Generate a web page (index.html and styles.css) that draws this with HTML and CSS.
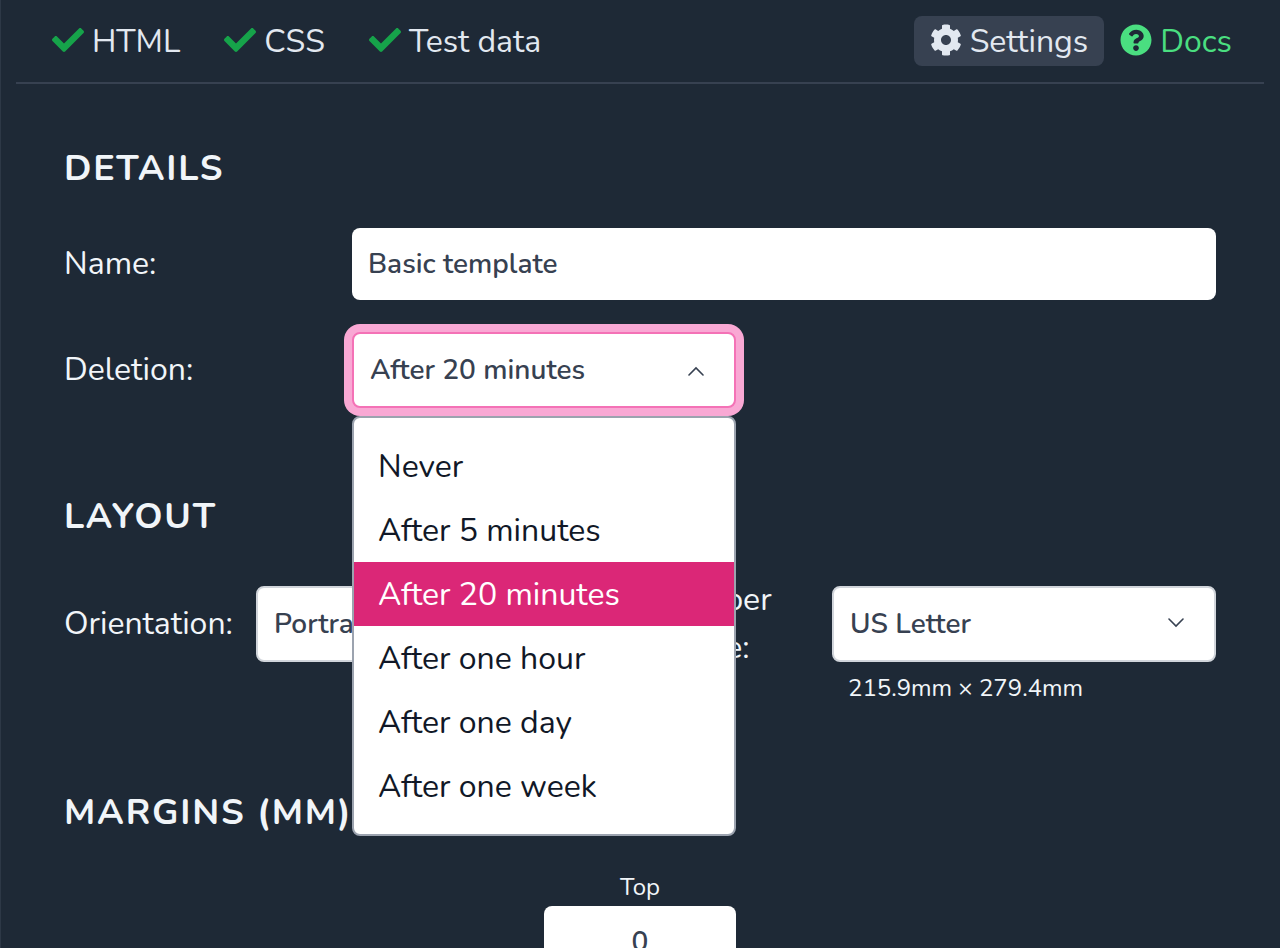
FILE: index.html
```html
<!DOCTYPE html>
<html lang="en">
<head>
<meta charset="utf-8">
<meta name="viewport" content="width=device-width, initial-scale=1">
<title>Template settings</title>
<link rel="stylesheet" href="styles.css">
</head>
<body>
<svg class="sprite" aria-hidden="true">
  <symbol id="check" viewBox="0 0 512 512"><path d="M173.898 439.404l-166.4-166.4c-9.997-9.997-9.997-26.206 0-36.204l36.203-36.204c9.997-9.998 26.207-9.998 36.204 0L192 312.69 432.095 72.596c9.997-9.997 26.207-9.997 36.204 0l36.203 36.204c9.997 9.997 9.997 26.206 0 36.204l-294.4 294.401c-9.998 9.997-26.207 9.997-36.204-.001z"/></symbol>
  <symbol id="cog" viewBox="0 0 512 512"><path d="M487.4 315.7l-42.6-24.6c4.3-23.2 4.3-47 0-70.2l42.6-24.6c4.9-2.8 7.1-8.6 5.5-14-11.1-35.6-30-67.8-54.7-94.6-3.8-4.1-10-5.1-14.8-2.3L380.8 110c-17.9-15.4-38.5-27.3-60.8-35.1V25.8c0-5.6-3.9-10.5-9.4-11.7-36.7-8.2-74.3-7.8-109.2 0-5.5 1.2-9.4 6.1-9.4 11.7V75c-22.2 7.9-42.8 19.8-60.8 35.1L88.7 85.5c-4.9-2.8-11-1.9-14.8 2.3-24.7 26.7-43.6 58.9-54.7 94.6-1.7 5.4.6 11.2 5.5 14L67.3 221c-4.3 23.2-4.3 47 0 70.2l-42.6 24.6c-4.9 2.8-7.1 8.6-5.5 14 11.1 35.6 30 67.8 54.7 94.6 3.8 4.1 10 5.1 14.8 2.3l42.6-24.6c17.9 15.4 38.5 27.3 60.8 35.1v49.2c0 5.6 3.9 10.5 9.4 11.7 36.7 8.2 74.3 7.8 109.2 0 5.5-1.2 9.4-6.1 9.4-11.7v-49.2c22.2-7.9 42.8-19.8 60.8-35.1l42.6 24.6c4.9 2.8 11 1.9 14.8-2.3 24.7-26.7 43.6-58.9 54.7-94.6 1.5-5.5-.7-11.3-5.6-14.1zM256 336c-44.1 0-80-35.9-80-80s35.9-80 80-80 80 35.9 80 80-35.9 80-80 80z"/></symbol>
  <symbol id="question" viewBox="0 0 512 512"><path d="M504 256c0 136.997-111.043 248-248 248S8 392.997 8 256C8 119.083 119.043 8 256 8s248 111.083 248 248zM262.655 90c-54.497 0-89.255 22.957-116.549 63.758-3.536 5.286-2.353 12.415 2.715 16.258l34.699 26.31c5.205 3.947 12.621 3.008 16.665-2.122 17.864-22.658 30.113-35.797 57.303-35.797 20.429 0 45.698 13.148 45.698 32.958 0 14.976-12.363 22.667-32.534 33.976C247.128 238.528 216 254.941 216 296v4c0 6.627 5.373 12 12 12h56c6.627 0 12-5.373 12-12v-1.333c0-28.462 83.186-29.647 83.186-106.667 0-58.002-60.165-102-116.531-102zM256 338c-25.365 0-46 20.635-46 46 0 25.364 20.635 46 46 46s46-20.636 46-46c0-25.364-20.635-46-46-46z"/></symbol>
  <symbol id="chevron" viewBox="0 0 16 16"><path d="M1 4l7 7 7-7" fill="none" stroke="currentColor" stroke-width="1.6" stroke-linecap="round"/></symbol>
</svg>

<header class="toolbar">
  <nav class="tabs">
    <button class="tab" type="button"><svg class="icon icon-check"><use href="#check"/></svg>HTML</button>
    <button class="tab" type="button"><svg class="icon icon-check"><use href="#check"/></svg>CSS</button>
    <button class="tab" type="button"><svg class="icon icon-check"><use href="#check"/></svg>Test data</button>
  </nav>
  <div class="actions">
    <button class="tab tab-active" type="button"><svg class="icon"><use href="#cog"/></svg>Settings</button>
    <a class="tab tab-docs" href="#docs"><svg class="icon"><use href="#question"/></svg>Docs</a>
  </div>
</header>

<main class="settings">
  <section class="section">
    <h2 class="heading">DETAILS</h2>
    <div class="row">
      <label class="label" for="name">Name:</label>
      <input class="input" id="name" type="text" value="Basic template">
    </div>
    <div class="row">
      <label class="label" for="deletion">Deletion:</label>
      <div class="picker picker-open">
        <select class="select" id="deletion">
          <option>After 20 minutes</option>
        </select>
        <svg class="chevron"><use href="#chevron"/></svg>
        <ul class="menu" role="listbox" aria-label="Deletion">
          <li class="option" role="option">Never</li>
          <li class="option" role="option">After 5 minutes</li>
          <li class="option option-selected" role="option" aria-selected="true">After 20 minutes</li>
          <li class="option" role="option">After one hour</li>
          <li class="option" role="option">After one day</li>
          <li class="option" role="option">After one week</li>
        </ul>
      </div>
    </div>
  </section>

  <section class="section">
    <h2 class="heading">LAYOUT</h2>
    <div class="row row-layout">
      <label class="label" for="orientation">Orientation:</label>
      <div class="picker">
        <select class="select" id="orientation">
          <option>Portrait</option>
        </select>
        <svg class="chevron"><use href="#chevron"/></svg>
      </div>
      <label class="label label-paper" for="paper">Paper size:</label>
      <div class="picker">
        <select class="select" id="paper">
          <option>US Letter</option>
        </select>
        <svg class="chevron"><use href="#chevron"/></svg>
      </div>
      <p class="hint">215.9mm × 279.4mm</p>
    </div>
  </section>

  <section class="section">
    <h2 class="heading">MARGINS (MM)</h2>
    <div class="margin-field">
      <label class="margin-label" for="top">Top</label>
      <input class="input input-center" id="top" type="text" inputmode="numeric" value="0">
    </div>
  </section>
</main>
</body>
</html>
```

FILE: styles.css
```css
* {
  box-sizing: border-box;
}

html {
  scrollbar-width: none;
}

body {
  margin: 0;
  border-left: 1px solid #2d3846;
  background: #1e2936;
  color: #f1f5f9;
  font-family: Nunito, Lato, sans-serif;
  font-size: 32px;
  font-weight: 400;
  line-height: 48px;
}

.sprite {
  display: none;
}

.toolbar {
  display: flex;
  justify-content: space-between;
  margin: 0 16px 0 15px;
  padding: 16px 16px 16px 20px;
  border-bottom: 2px solid #374151;
}

.tabs {
  display: flex;
  gap: 12px;
}

.actions {
  display: flex;
}

.tab {
  display: flex;
  align-items: center;
  gap: 8px;
  padding: 2px 16px 0;
  border: 0;
  border-radius: 8px;
  background: transparent;
  color: #e2e8f0;
  font: inherit;
  text-decoration: none;
}

.tab-active {
  background: #374151;
}

.tab-docs {
  color: #4ade80;
}

.icon {
  width: 32px;
  height: 32px;
  margin-bottom: 4px;
  fill: currentColor;
}

.icon-check {
  color: #16a34a;
}

.settings {
  padding: 61px 64px 0 63px;
}

.section {
  margin-bottom: 85px;
}

.heading {
  margin: 0 0 35px;
  font-size: 36px;
  font-weight: 700;
  letter-spacing: 0.05em;
}

.row {
  display: grid;
  grid-template-columns: 3fr 4fr 5fr;
  align-items: center;
  margin-bottom: 32px;
}

.row .input {
  grid-column: 2 / 4;
}

.row-layout {
  grid-template-columns: 2fr 4fr 2fr 4fr;
  margin-bottom: 0;
}

.label-paper {
  padding: 0 48px;
}

.input,
.select {
  display: block;
  width: 100%;
  border: 0;
  border-radius: 8px;
  background: #fff;
  color: #374151;
  font: inherit;
  font-size: 28px;
  font-weight: 600;
  outline: 0;
}

.input {
  height: 72px;
  padding: 0 16px;
}

.input-center {
  text-align: center;
}

.picker {
  position: relative;
}

.select {
  height: 76px;
  padding: 0 64px 0 16px;
  border: 2px solid #d1d5db;
  appearance: none;
}

.chevron {
  position: absolute;
  top: 29px;
  right: 32px;
  width: 16px;
  height: 16px;
  color: #374151;
  pointer-events: none;
}

.picker-open .select {
  border-color: #f472b6;
  box-shadow: 0 0 0 8px #f9a8d4;
}

.picker-open .chevron {
  top: 31px;
  transform: rotate(180deg);
}

.menu {
  position: absolute;
  z-index: 1;
  top: 100%;
  left: 0;
  width: 100%;
  margin: 8px 0 0;
  padding: 16px 0;
  border: 2px solid #9ca3af;
  border-radius: 8px;
  background: #fff;
  color: #111827;
  list-style: none;
}

.option {
  padding: 9px 24px 7px;
}

.option-selected {
  background: #db2777;
  color: #fff;
}

.hint {
  grid-column: 4;
  margin: 0;
  padding-left: 16px;
  font-size: 24px;
  line-height: 32px;
}

.margin-field {
  width: 192px;
  margin: 0 auto;
}

.margin-label {
  display: block;
  margin-bottom: 4px;
  font-size: 24px;
  line-height: 30px;
  text-align: center;
}
```
